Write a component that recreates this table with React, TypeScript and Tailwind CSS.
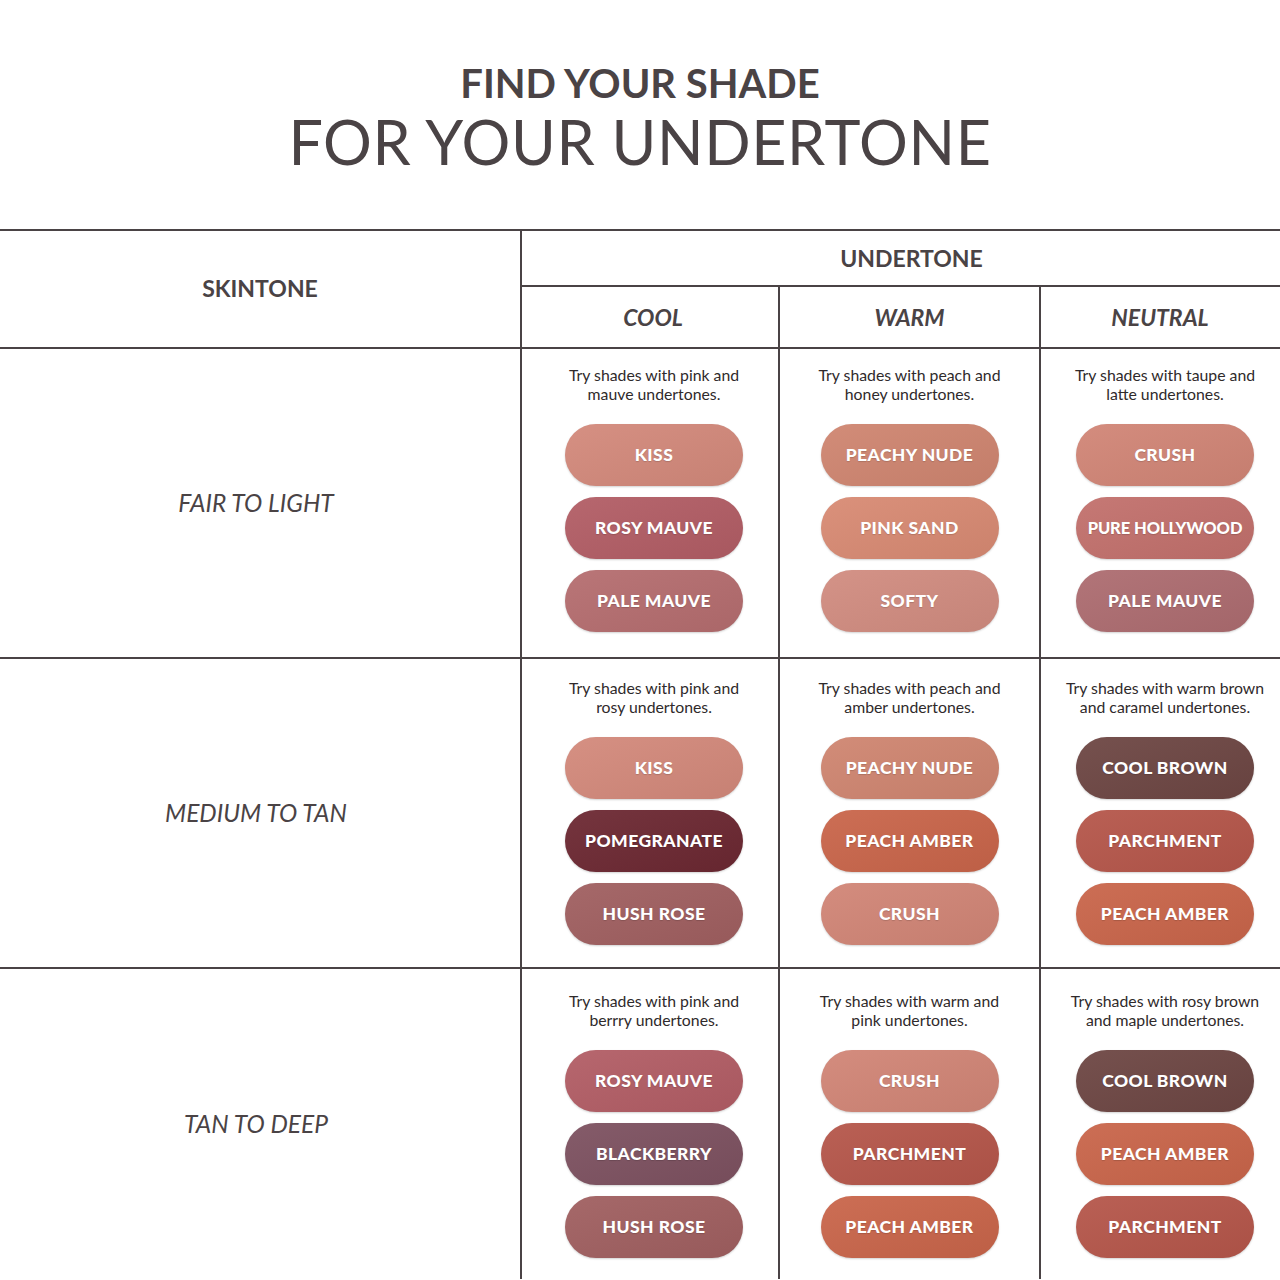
import React from "react";

type Shade = { name: string; color: string };
type Cell = { note: string[]; shades: Shade[] };
type Row = { label: string; pad: string; cells: Cell[] };

const C = {
  kiss: "#d3897b",
  rosyMauve: "#b25d65",
  paleMauve: "#b56d6f",
  peachyNude: "#cf8570",
  pinkSand: "#d88a73",
  softy: "#d18c80",
  crush: "#d18576",
  pureHollywood: "#c2706c",
  paleMauveN: "#ad6c70",
  pomegranate: "#6c2832",
  hushRose: "#a05f60",
  peachAmber: "#c9654a",
  coolBrown: "#6d4643",
  parchment: "#b5564a",
  blackberry: "#7d5160",
};

const rows: Row[] = [
  {
    label: "FAIR TO LIGHT",
    pad: "pt-[16px]",
    cells: [
      {
        note: ["Try shades with pink and", "mauve undertones."],
        shades: [
          { name: "KISS", color: C.kiss },
          { name: "ROSY MAUVE", color: C.rosyMauve },
          { name: "PALE MAUVE", color: C.paleMauve },
        ],
      },
      {
        note: ["Try shades with peach and", "honey undertones."],
        shades: [
          { name: "PEACHY NUDE", color: C.peachyNude },
          { name: "PINK SAND", color: C.pinkSand },
          { name: "SOFTY", color: C.softy },
        ],
      },
      {
        note: ["Try shades with taupe and", "latte undertones."],
        shades: [
          { name: "CRUSH", color: C.crush },
          { name: "PURE HOLLYWOOD", color: C.pureHollywood },
          { name: "PALE MAUVE", color: C.paleMauveN },
        ],
      },
    ],
  },
  {
    label: "MEDIUM TO TAN",
    pad: "pt-[19px]",
    cells: [
      {
        note: ["Try shades with pink and", "rosy undertones."],
        shades: [
          { name: "KISS", color: C.kiss },
          { name: "POMEGRANATE", color: C.pomegranate },
          { name: "HUSH ROSE", color: C.hushRose },
        ],
      },
      {
        note: ["Try shades with peach and", "amber undertones."],
        shades: [
          { name: "PEACHY NUDE", color: C.peachyNude },
          { name: "PEACH AMBER", color: C.peachAmber },
          { name: "CRUSH", color: C.crush },
        ],
      },
      {
        note: ["Try shades with warm brown", "and caramel undertones."],
        shades: [
          { name: "COOL BROWN", color: C.coolBrown },
          { name: "PARCHMENT", color: C.parchment },
          { name: "PEACH AMBER", color: C.peachAmber },
        ],
      },
    ],
  },
  {
    label: "TAN TO DEEP",
    pad: "pt-[22px]",
    cells: [
      {
        note: ["Try shades with pink and", "berrry undertones."],
        shades: [
          { name: "ROSY MAUVE", color: C.rosyMauve },
          { name: "BLACKBERRY", color: C.blackberry },
          { name: "HUSH ROSE", color: C.hushRose },
        ],
      },
      {
        note: ["Try shades with warm and", "pink undertones."],
        shades: [
          { name: "CRUSH", color: C.crush },
          { name: "PARCHMENT", color: C.parchment },
          { name: "PEACH AMBER", color: C.peachAmber },
        ],
      },
      {
        note: ["Try shades with rosy brown", "and maple undertones."],
        shades: [
          { name: "COOL BROWN", color: C.coolBrown },
          { name: "PEACH AMBER", color: C.peachAmber },
          { name: "PARCHMENT", color: C.parchment },
        ],
      },
    ],
  },
];

// column widths: skintone | cool | warm | neutral (neutral runs off the edge)
const cols = "grid grid-cols-[522px_258px_261px_248px]";

function Pill({ shade }: { shade: Shade }) {
  // long names get squeezed a bit so they sit inside the pill like the others
  const long = shade.name.length > 12;
  return (
    <div
      className={`flex h-[62px] w-[178px] items-center justify-center whitespace-nowrap rounded-full font-black text-white shadow-[0_1px_2px_rgba(0,0,0,0.18)] [text-shadow:0_1px_1px_rgba(0,0,0,0.15)] ${
        long ? "text-[16.5px] tracking-[-0.005em]" : "text-[17.5px] tracking-[0.025em]"
      }`}
      style={{
        backgroundColor: shade.color,
        backgroundImage:
          "linear-gradient(160deg, rgba(255,255,255,0.06), rgba(0,0,0,0.06))",
      }}
    >
      {shade.name}
    </div>
  );
}

function ShadeCell({ cell, idx, pad }: { cell: Cell; idx: number; pad: string }) {
  const edge =
    idx === 0
      ? "border-r-2 border-[#4a4345] pl-[8px]"
      : idx === 1
        ? "border-r-2 border-[#4a4345]"
        : "";
  return (
    <div className={`flex flex-col items-center ${pad} ${edge}`}>
      <p className="whitespace-nowrap text-center text-[15.8px] leading-[19px] text-[#2f2a2b]">
        {cell.note[0]}
        <br />
        {cell.note[1]}
      </p>
      <div className="mt-[21px] flex flex-col gap-[11px]">
        {cell.shades.map((s, i) => (
          <Pill key={i} shade={s} />
        ))}
      </div>
    </div>
  );
}

export default function App() {
  return (
    <div className="h-[1280px] w-[1280px] overflow-hidden bg-white font-['Lato',sans-serif] text-[#4a4345]">
      <div className="flex h-[229px] flex-col items-center pt-[62px]">
        <h1 className="text-[40px] font-bold leading-[42px]">
          FIND YOUR SHADE
        </h1>
        <h2 className="mt-[3px] text-[61px] font-normal leading-[70px] tracking-[0.01em]">
          FOR YOUR UNDERTONE
        </h2>
      </div>

      <div className="w-[1289px] border-t-2 border-[#4a4345]">
        {/* header */}
        <div className={`${cols} h-[118px] border-b-2 border-[#4a4345]`}>
          <div className="flex items-center justify-center border-r-2 border-[#4a4345] pb-[1px] text-[23px] font-bold">
            SKINTONE
          </div>
          <div className="col-span-3 flex flex-col">
            <div className="flex h-[56px] items-center justify-center border-b-2 border-[#4a4345] pl-[12px] text-[23px] font-bold">
              UNDERTONE
            </div>
            <div className="grid flex-1 grid-cols-[258px_261px_248px]">
              <div className="flex items-center justify-center border-r-2 border-[#4a4345] pl-[6px] text-[23px] font-bold italic">
                COOL
              </div>
              <div className="flex items-center justify-center border-r-2 border-[#4a4345] text-[23px] font-bold italic">
                WARM
              </div>
              <div className="flex items-center justify-center pr-[10px] text-[23px] font-bold italic">
                NEUTRAL
              </div>
            </div>
          </div>
        </div>

        {rows.map((row, ri) => (
          <div
            key={ri}
            className={`${cols} h-[310px] ${
              ri < rows.length - 1 ? "border-b-2 border-[#4a4345]" : ""
            }`}
          >
            <div className="flex items-center justify-center border-r-2 border-[#4a4345] pr-[8px] text-[24.5px] font-normal italic">
              {row.label}
            </div>
            {row.cells.map((cell, ci) => (
              <ShadeCell key={ci} cell={cell} idx={ci} pad={row.pad} />
            ))}
          </div>
        ))}
      </div>
    </div>
  );
}
